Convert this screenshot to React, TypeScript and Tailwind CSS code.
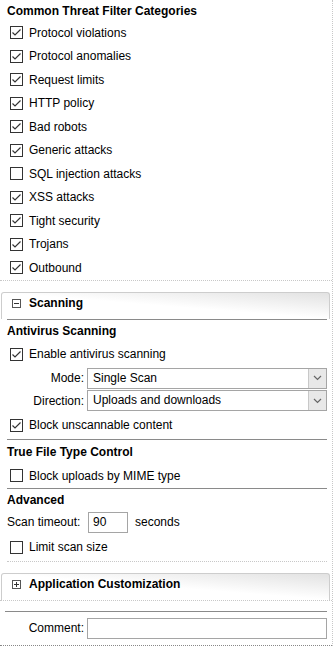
import React from 'react';

const categories: [string, boolean][] = [
  ['Protocol violations', true],
  ['Protocol anomalies', true],
  ['Request limits', true],
  ['HTTP policy', true],
  ['Bad robots', true],
  ['Generic attacks', true],
  ['SQL injection attacks', false],
  ['XSS attacks', true],
  ['Tight security', true],
  ['Trojans', true],
  ['Outbound', true],
];

function Check({ checked }: { checked: boolean }) {
  return (
    <svg width="13" height="13" viewBox="0 0 13 13" className="shrink-0">
      <rect x="0.5" y="0.5" width="12" height="12" fill="#fff" stroke="#333" />
      {checked && <path d="M2.5 6.5 L5 9 L10.5 3.5" fill="none" stroke="#333" strokeWidth="1.2" />}
    </svg>
  );
}

function CheckRow({ label, checked, h, pl = 'pl-[10px]' }: { label: string; checked: boolean; h: string; pl?: string }) {
  return (
    <div className={`flex items-center gap-[6px] ${pl} ${h}`}>
      <Check checked={checked} />
      <span>{label}</span>
    </div>
  );
}

function Select({ value }: { value: string }) {
  return (
    <div className="flex h-[21px] w-[240px] border border-[#a5a5a5] bg-white">
      <span className="flex-1 pl-[5px] leading-[19px]">{value}</span>
      <div className="flex w-[18px] items-center justify-center border-l border-[#c8c8c8] bg-[#e8e8e8]">
        <svg width="9" height="6" viewBox="0 0 9 6">
          <path d="M1 1 L4.5 4.5 L8 1" fill="none" stroke="#666" strokeWidth="1.2" />
        </svg>
      </div>
    </div>
  );
}

function PanelHeader({ title, open }: { title: string; open: boolean }) {
  return (
    <div className="ml-[1px] mr-[2px] h-[27px] rounded-t-[3px] border border-b-0 border-[#cdcdcd] bg-gradient-to-bl from-[#e2e2e2] via-white to-white">
      <div className="flex h-[21px] items-center gap-[8px] pl-[10px]">
        <svg width="9" height="9" viewBox="0 0 9 9" className="shrink-0">
          <rect x="0.5" y="0.5" width="8" height="8" fill="#fff" stroke="#555" />
          <path d="M2 4.5 H7" stroke="#333" />
          {!open && <path d="M4.5 2 V7" stroke="#333" />}
        </svg>
        <span className="font-bold">{title}</span>
      </div>
    </div>
  );
}

export default function App() {
  return (
    <div className="h-[652px] w-[335px] bg-white text-[12px] text-black" style={{ fontFamily: '"Liberation Sans", Arial, sans-serif' }}>
      <div className="w-[333px] border-r border-dotted border-[#c8c8c8]">
        <div className="border-b border-dotted border-[#c8c8c8]">
          <div className="flex h-[21px] items-center pl-[7px] font-bold">Common Threat Filter Categories</div>
          {categories.map(([label, checked]) => (
            <CheckRow key={label} label={label} checked={checked} h="h-[23.5px]" />
          ))}
        </div>

        <div className="pt-[11px]">
          <PanelHeader title="Scanning" open />
          <div className="ml-[7px] mr-[5px] border-b border-dotted border-[#c8c8c8]">
            <div className="border-t border-[#8a8a8a]">
              <div className="flex h-[22px] items-center font-bold">Antivirus Scanning</div>
              <CheckRow label="Enable antivirus scanning" checked h="h-[25px]" pl="pl-[3px]" />
              <div className="flex h-[23px] items-center">
                <span className="w-[80px] pr-[3px] text-right">Mode:</span>
                <Select value="Single Scan" />
              </div>
              <div className="flex h-[22px] items-center">
                <span className="w-[80px] pr-[3px] text-right">Direction:</span>
                <Select value="Uploads and downloads" />
              </div>
              <CheckRow label="Block unscannable content" checked h="h-[27px]" pl="pl-[3px]" />
            </div>
            <div className="border-t border-[#8a8a8a]">
              <div className="flex h-[24px] items-center font-bold">True File Type Control</div>
              <CheckRow label="Block uploads by MIME type" checked={false} h="h-[24px]" pl="pl-[3px]" />
            </div>
            <div className="border-t border-[#8a8a8a]">
              <div className="flex h-[22px] items-center font-bold">Advanced</div>
              <div className="flex h-[23px] items-center">
                <span className="w-[81px]">Scan timeout:</span>
                <div className="flex h-[21px] w-[40px] items-center border border-[#a5a5a5] pl-[4px]">90</div>
                <span className="pl-[7px]">seconds</span>
              </div>
              <CheckRow label="Limit scan size" checked={false} h="h-[27px]" pl="pl-[3px]" />
            </div>
          </div>
        </div>

        <div className="pt-[11px]">
          <PanelHeader title="Application Customization" open={false} />
          <div className="border-b border-dotted border-[#c8c8c8]"></div>
        </div>

        <div className="mt-[10px] border-b border-dotted border-[#888]">
          <div className="ml-[5px] mr-[5px] border-t border-[#8a8a8a]"></div>
          <div className="flex h-[33px] items-center">
            <span className="w-[87px] pr-[3px] text-right">Comment:</span>
            <div className="h-[21px] w-[240px] border border-[#a5a5a5] bg-white"></div>
          </div>
        </div>
      </div>
    </div>
  );
}
